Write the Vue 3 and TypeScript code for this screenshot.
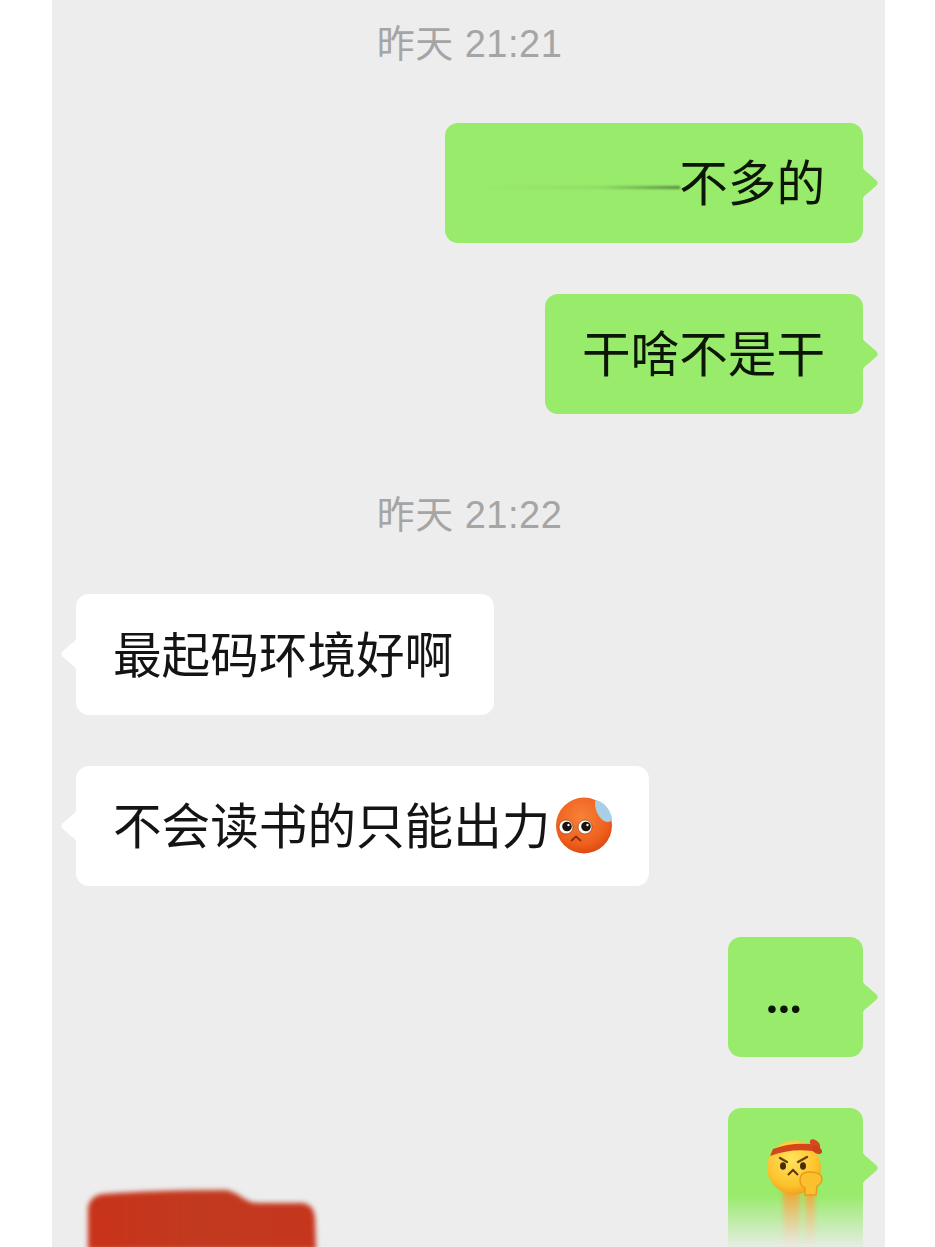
<template>
  <div class="page">
    <div class="chat">
      <template v-for="(item, i) in items" :key="i">
        <div v-if="item.kind === 'time'" class="time">{{ item.text }}</div>

        <div v-else class="row" :class="item.side">
          <div class="bubble" :class="{ dots: item.dots, wide: item.streak }">
            <i v-if="item.streak" class="streak"></i>
            <span class="text">{{ item.text }}</span>
            <!-- 流汗表情 -->
            <svg v-if="item.sweat" class="emoji" viewBox="0 0 58 58">
              <defs>
                <radialGradient id="hot" cx="45%" cy="35%" r="70%">
                  <stop offset="0" stop-color="#f8823a" />
                  <stop offset="0.7" stop-color="#ee5f1c" />
                  <stop offset="1" stop-color="#d9430f" />
                </radialGradient>
              </defs>
              <circle cx="29" cy="28.5" r="28" fill="url(#hot)" />
              <path d="M41 3 C49 5 55 12 57 21 C57 25 53 26 49 24 C44 21 40 13 40 7 C40 5 40 4 41 3Z" fill="#a9cfe6" />
              <circle cx="11" cy="30" r="7" fill="#fff" stroke="#7a2c0c" stroke-width="0.6" />
              <circle cx="30" cy="30" r="7" fill="#fff" stroke="#7a2c0c" stroke-width="0.6" />
              <circle cx="12" cy="29.5" r="4.8" fill="#1c1008" />
              <circle cx="31" cy="29.5" r="4.8" fill="#1c1008" />
              <circle cx="13.5" cy="28" r="1.2" fill="#fff" />
              <circle cx="32.5" cy="28" r="1.2" fill="#fff" />
              <path d="M16 44 L21 39.5 L26 44" fill="none" stroke="#8c2a0a" stroke-width="1.8" />
            </svg>
          </div>
        </div>
      </template>

      <div class="row last">
        <!-- 打码的头像 -->
        <svg class="blob" viewBox="0 0 230 60">
          <defs>
            <linearGradient id="red" x1="0" x2="1" y1="0" y2="0">
              <stop offset="0" stop-color="#c8321a" />
              <stop offset="0.5" stop-color="#c13a20" />
              <stop offset="1" stop-color="#c5361d" />
            </linearGradient>
          </defs>
          <path
            d="M0 60 L0 18 Q2 5 16 4 Q70 0 138 0 Q145 1 155 8 Q162 13 170 13 L215 13 Q226 15 227 28 L228 60Z"
            fill="url(#red)"
          />
        </svg>

        <div class="bubble fist">
          <i class="smear smear-a"></i>
          <i class="smear smear-b"></i>
          <!-- 加油表情 -->
          <svg class="emoji emoji-fist" viewBox="0 0 58 58">
            <defs>
              <radialGradient id="sun" cx="45%" cy="35%" r="70%">
                <stop offset="0" stop-color="#ffe35c" />
                <stop offset="0.7" stop-color="#fcc22c" />
                <stop offset="1" stop-color="#ee9a18" />
              </radialGradient>
            </defs>
            <circle cx="28" cy="28.5" r="27" fill="url(#sun)" />
            <path d="M7 10 Q28 2 52 6 L53 13 Q28 8 4 17Z" fill="#d2481c" />
            <ellipse cx="49" cy="5" rx="6" ry="3.6" transform="rotate(40 49 5)" fill="#d4481c" />
            <ellipse cx="51" cy="11" rx="5.5" ry="3.4" transform="rotate(30 51 11)" fill="#c9421a" />
            <path d="M14 19 L21 23" stroke="#6a3f0c" stroke-width="2.4" stroke-linecap="round" />
            <path d="M41 18 L32 23" stroke="#6a3f0c" stroke-width="2.4" stroke-linecap="round" />
            <ellipse cx="17" cy="27" rx="3" ry="3.8" fill="#4a2c08" />
            <ellipse cx="37" cy="27" rx="3" ry="3.8" fill="#4a2c08" />
            <path d="M22 36 L27 31 L32 36" fill="none" stroke="#5a3608" stroke-width="2" />
            <path d="M34 41 Q34 33 43 33 Q55 33 56 39 Q56 45 51 47 L50 56 L39 56 L39 49 Q34 47 34 41Z" fill="#fcc02e" stroke="#e79a1a" stroke-width="1.4" />
          </svg>
          <i class="fade"></i>
        </div>
      </div>
    </div>
  </div>
</template>

<script setup lang="ts">
interface ChatItem {
  kind: 'time' | 'msg'
  text: string
  side?: 'left' | 'right'
  streak?: boolean
  sweat?: boolean
  dots?: boolean
}

const items: ChatItem[] = [
  { kind: 'time', text: '昨天 21:21' },
  { kind: 'msg', side: 'right', text: '不多的', streak: true },
  { kind: 'msg', side: 'right', text: '干啥不是干' },
  { kind: 'time', text: '昨天 21:22' },
  { kind: 'msg', side: 'left', text: '最起码环境好啊' },
  { kind: 'msg', side: 'left', text: '不会读书的只能出力', sweat: true },
  { kind: 'msg', side: 'right', text: '...', dots: true },
]
</script>

<style scoped>
.page {
  width: 935px;
  height: 1247px;
  background: #fff;
  overflow: hidden;
}

.chat {
  width: 833px;
  height: 1247px;
  margin-left: 52px;
  padding: 19px 22px 0 24px;
  box-sizing: border-box;
  background: #ededed;
  overflow: hidden;
  display: flex;
  flex-direction: column;
  font-family: "Liberation Sans", "Noto Sans CJK SC", sans-serif;
}

.time {
  height: 50px;
  line-height: 50px;
  margin: 25px 0 54px;
  text-align: center;
  font-size: 38px;
  letter-spacing: 0.5px;
  color: #a5a5a5;
  flex-shrink: 0;
}

.time:first-child {
  margin-top: 0;
}

.row {
  display: flex;
  flex-shrink: 0;
  margin-bottom: 51px;
}

.row.left {
  justify-content: flex-start;
}

.row.right {
  justify-content: flex-end;
}

.bubble {
  position: relative;
  display: flex;
  align-items: center;
  min-height: 120px;
  padding: 0 41px 0 37px;
  box-sizing: border-box;
  border-radius: 13px;
  font-size: 48.6px;
  color: #141414;
  background: #fff;
}

.time + .left .bubble {
  min-height: 121px;
}

.bubble.wide {
  width: 418px;
  justify-content: flex-end;
}

/* 气泡尖角 */
.bubble::after {
  content: '';
  position: absolute;
  top: 42px;
  width: 17px;
  height: 36px;
  background: inherit;
  clip-path: path('M0 0 C1 4 3 6 6 8 L15 16 Q16.5 18 15 20 L6 28 C3 30 1 32 0 36Z');
}

.right .bubble,
.last .bubble {
  padding: 0 38px 0 37px;
  background: #98eb6b;
  color: #0b1606;
}

.right .bubble::after,
.last .bubble::after {
  right: -16px;
}

.left .bubble::after {
  left: -16px;
  transform: scaleX(-1);
}

.text {
  position: relative;
  white-space: nowrap;
  margin-bottom: 6px;
}

.streak {
  position: absolute;
  left: 35px;
  top: 63px;
  width: 200px;
  height: 3px;
  background: linear-gradient(90deg, rgba(110, 160, 85, 0), rgba(110, 160, 85, 0.2) 60%, rgba(80, 120, 60, 0.85));
  filter: blur(0.8px);
}

.bubble.dots {
  min-width: 135px;
  align-items: flex-start;
  padding-left: 38px;
}

.dots .text {
  font-family: Lato, sans-serif;
  font-size: 50px;
  font-weight: bold;
  line-height: 50px;
  margin: 32px 0 0;
}

.emoji {
  width: 58px;
  height: 58px;
  margin: 0 -5px 0 5px;
  flex-shrink: 0;
  position: relative;
}

.last {
  justify-content: space-between;
  margin-bottom: 0;
}

.blob {
  width: 230px;
  height: 60px;
  margin: 82px 0 0 12px;
  filter: blur(2.5px);
}

.last .fist {
  width: 135px;
  height: 139px;
  min-height: 0;
  padding: 31px 0 0 38px;
  align-items: flex-start;
  border-radius: 13px 13px 0 0;
}

.emoji-fist {
  margin: 0;
}

.smear {
  position: absolute;
  top: 80px;
  height: 59px;
  background: linear-gradient(180deg, #f0a83a, rgba(232, 170, 80, 0.55));
  filter: blur(2px);
}

.smear-a {
  left: 55px;
  width: 17px;
}

.smear-b {
  left: 77px;
  width: 10px;
}

.fade {
  position: absolute;
  left: 0;
  right: 0;
  bottom: 0;
  height: 52px;
  background: linear-gradient(180deg, rgba(237, 237, 237, 0), rgba(237, 237, 237, 0.92));
}
</style>

<style>
body {
  background: #fff;
}
</style>
